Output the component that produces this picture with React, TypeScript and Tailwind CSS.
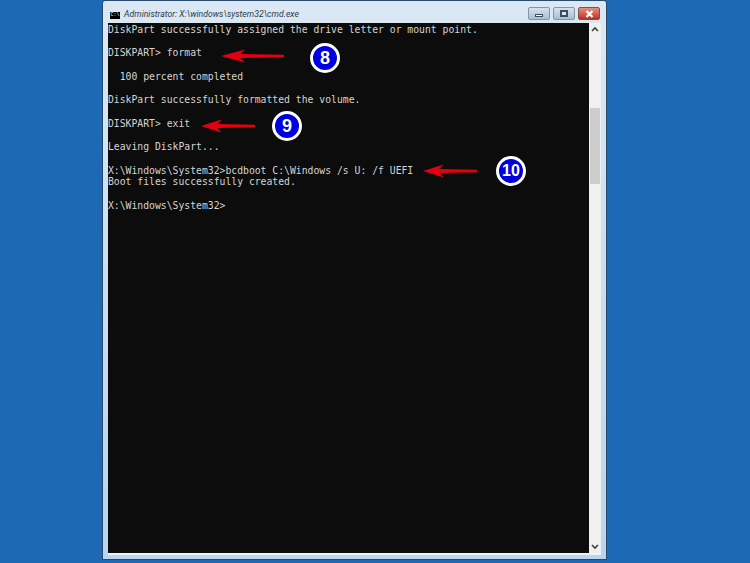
import React from 'react';

const LINES = [
  'DiskPart successfully assigned the drive letter or mount point.',
  '',
  'DISKPART> format',
  '',
  '  100 percent completed',
  '',
  'DiskPart successfully formatted the volume.',
  '',
  'DISKPART> exit',
  '',
  'Leaving DiskPart...',
  '',
  'X:\\Windows\\System32>bcdboot C:\\Windows /s U: /f UEFI',
  'Boot files successfully created.',
  '',
  'X:\\Windows\\System32>',
];

const Arrow = ({ className }: { className: string }) => (
  <svg className={className} width="64" height="14" viewBox="0 0 64 14" preserveAspectRatio="none">
    <path d="M0 7 L24 0.5 L19 5 L63 5.8 L63 8.2 L19 9 L24 13.5 Z" fill="#e3000f" />
  </svg>
);

const Badge = ({ n, className }: { n: string; className: string }) => (
  <div className={`absolute flex h-[30px] w-[30px] items-center justify-center rounded-full border-[3px] border-white bg-[#0000e0] font-['Liberation_Sans',sans-serif] font-bold text-white ${className}`}>
    {n}
  </div>
);

export default function App() {
  return (
    <div className="relative flex h-[563px] w-[750px] overflow-hidden bg-[#1e69b5] pl-[102px]">
      {/* Window */}
      <div className="flex h-[560px] w-[505px] flex-col rounded-t-[3px] border border-[#2a4a6b] bg-gradient-to-b from-[#dbe8f4] to-[#b9d4ee] px-[5px] pb-[4px]">
        {/* Title bar */}
        <div className="flex h-[22px] shrink-0">
          <div className="flex items-center pt-[6px]">
            <div className="ml-[2px] flex h-[7px] w-[10px] items-center justify-center bg-black font-['Liberation_Mono',monospace] text-[5px] leading-none text-white">
              C:\
            </div>
            <span className="ml-[4px] font-['Roboto',sans-serif] text-[8.7px] italic text-[#2f3b48]">
              Administrator: X:\windows\system32\cmd.exe
            </span>
          </div>
          <div className="ml-auto mr-[1px] flex items-start gap-[3px] pt-[6px]">
            <div className="flex h-[13px] w-[22px] items-end justify-center rounded-[2px] border border-[#7f97ad] bg-gradient-to-b from-[#d5e2ee] to-[#a9bfd4] pb-[2px]">
              <div className="h-[3px] w-[8px] border border-[#3d4d5c] bg-white" />
            </div>
            <div className="flex h-[13px] w-[22px] items-center justify-center rounded-[2px] border border-[#7f97ad] bg-gradient-to-b from-[#d5e2ee] to-[#a9bfd4]">
              <div className="h-[7px] w-[8px] border-2 border-[#3d4d5c] bg-[#dce6ef]" />
            </div>
            <div className="flex h-[13px] w-[22px] items-center justify-center rounded-[2px] border border-[#8d4a3e] bg-gradient-to-b from-[#e0917f] to-[#bb2f1f]">
              <svg width="9" height="8" viewBox="0 0 9 8">
                <path d="M1.5 1 L7.5 7 M7.5 1 L1.5 7" stroke="#fff" strokeWidth="2.2" />
              </svg>
            </div>
          </div>
        </div>

        {/* Console + scrollbar */}
        <div className="flex min-h-0 flex-1 border-b-[2px] border-[#eef3f8]">
          <div className="flex-1 bg-[#0c0c0c] pt-[1px] font-['DejaVu_Sans_Mono',monospace] text-[9.75px] leading-[11.73px] text-[#d4d4d4]">
            {LINES.map((line, i) => (
              <div key={i} className="h-[11.73px] whitespace-pre">
                {line}
              </div>
            ))}
          </div>
          <div className="flex w-[12px] shrink-0 flex-col bg-[#f0f0f0]">
            <div className="flex h-[12px] items-center justify-center">
              <svg width="8" height="6" viewBox="0 0 8 6">
                <path d="M1 5 L4 2 L7 5" stroke="#404040" strokeWidth="1.6" fill="none" />
              </svg>
            </div>
            <div className="mx-[1px] mt-[73px] h-[76px] bg-[#cdcdcd]" />
            <div className="flex-1" />
            <div className="flex h-[12px] items-center justify-center">
              <svg width="8" height="6" viewBox="0 0 8 6">
                <path d="M1 1 L4 4 L7 1" stroke="#404040" strokeWidth="1.6" fill="none" />
              </svg>
            </div>
          </div>
        </div>
      </div>

      {/* Annotations */}
      <Arrow className="absolute left-[221px] top-[49px]" />
      <Badge n="8" className="left-[310px] top-[43px] text-[18px]" />
      <Arrow className="absolute left-[201px] top-[119px] w-[55px]" />
      <Badge n="9" className="left-[272px] top-[111px] text-[18px]" />
      <Arrow className="absolute left-[423px] top-[164px] w-[55px]" />
      <Badge n="10" className="left-[496px] top-[156px] text-[16px]" />
    </div>
  );
}
